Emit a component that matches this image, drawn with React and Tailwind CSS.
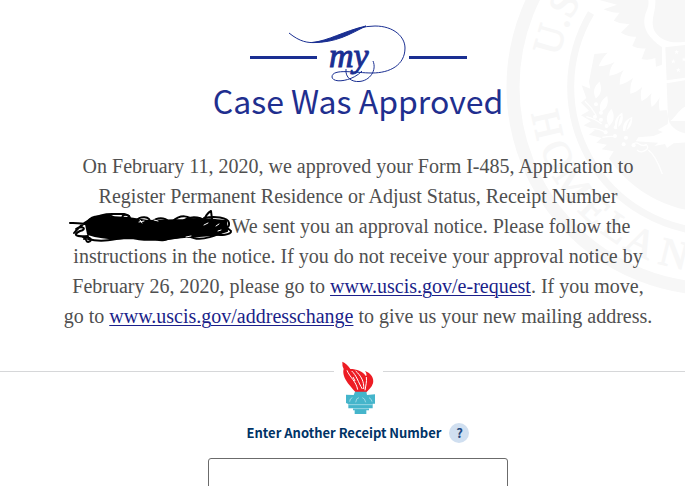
import React from "react";

const motto = [
  { letter: "H", at: 41 },
  { letter: "O", at: 76 },
  { letter: "M", at: 110 },
  { letter: "E", at: 147 },
  { letter: "L", at: 178 },
  { letter: "A", at: 208 },
  { letter: "N", at: 246 },
];

const leaves = [
  { x: 338, y: 270, r: 12 },
  { x: 357, y: 312, r: 22 },
  { x: 376, y: 352, r: 8 },
  { x: 402, y: 362, r: 22 },
  { x: 428, y: 372, r: 32 },
];

const berries = [
  [333, 313], [348, 338], [330, 350], [348, 359], [365, 378], [362, 397],
  [392, 382], [390, 408], [420, 388], [423, 413], [416, 433], [446, 436],
];

const stars = [
  [575, 156], [597, 178], [565, 184], [580, 210],
];

const Seal = () => (
  <svg
    className="pointer-events-none absolute top-0 left-1/2 ml-[157px] -z-10 text-[40px] font-['Liberation_Serif',serif]"
    width="430"
    height="300"
    viewBox="500 0 430 300"
    fill="#f7f7f7"
    aria-hidden="true"
  >
    <defs>
      <path id="sealTop" d="M556 87a159 159 0 0 1 318 0" />
      <path id="sealBottom" d="M530 87a185 185 0 0 0 370 0" />
    </defs>
    <circle cx="715" cy="87" r="202" fill="none" stroke="#f7f7f7" strokeWidth="13" />
    <path d="M591 13A145 145 0 0 0 715 232A145 145 0 0 0 839 13" fill="none" stroke="#f7f7f7" strokeWidth="7" />
    <text stroke="#f7f7f7">
      <textPath href="#sealTop" startOffset="30">U.S.</textPath>
    </text>
    {motto.map((m) => (
      <text key={m.letter} textAnchor="middle" stroke="#f7f7f7">
        <textPath href="#sealBottom" startOffset={m.at}>{m.letter}</textPath>
      </text>
    ))}

    <g transform="translate(485 0) scale(0.3333)">
      {/* upper wing and head */}
      <path d="M343 0L396 14L356 28Q382 40 404 38L386 62Q410 74 434 72L408 98Q432 112 454 110L442 138Q462 148 482 145L470 177Q490 182 511 174L513 200L531 194V142C490 112 476 88 478 60C480 34 494 24 490 0Z" />
      <path d="M511 0C514 34 494 58 508 92C526 122 560 132 600 125H640V0Z" />
      {/* shield */}
      <path d="M541 142L640 130V232L600 233L545 241Z" />
      <path d="M545 250L600 241H640V400H600C570 392 552 376 549 350Z" />
      <path d="M556 363C572 352 578 332 600 320H640V363Z" fill="#fff" />
      {/* lower wing, olive branch and body */}
      <path d="M328 162L368 158Q350 175 341 199Q366 198 389 186Q374 202 373 227Q396 224 416 210Q404 228 404 254Q426 250 444 234Q434 255 436 281Q456 276 472 260Q464 280 470 304Q486 296 500 279Q494 296 500 321Q514 312 524 292Q520 312 524 332L545 330Q552 352 548 372L518 390L534 396L506 408L460 412L452 424L520 428L508 438L540 432L546 444L566 430L640 424V636C520 620 432 560 372 476L386 454L350 448L366 434L334 428L350 414L312 404L330 390L296 376L318 364L288 346L312 332L288 308L304 294L290 256L316 266L312 245Z" />
      <g fill="#fff">
        {leaves.map((l) => (
          <path
            key={l.x}
            transform={`translate(${l.x} ${l.y}) rotate(${l.r})`}
            d="M0 26C-15 8-12-8 0-26C12-8 15 8 0 26Z"
          />
        ))}
        {berries.map(([x, y]) => (
          <circle key={`${x}-${y}`} cx={x} cy={y} r="6" />
        ))}
        {stars.map(([x, y]) => (
          <path
            key={x}
            transform={`translate(${x} ${y})`}
            d="M0-7L2-2L7-2L3 1L5 7L0 3L-5 7L-3 1L-7-2L-2-2Z"
          />
        ))}
      </g>
      <path
        d="M440 436Q450 424 462 432T484 434Q494 444 480 452T456 450M490 450Q512 466 532 522M300 304Q320 322 333 345M304 350Q330 356 350 372M318 386Q340 384 360 396M352 412Q374 408 392 410"
        fill="none"
        stroke="#fff"
        strokeWidth="4"
      />
      <path d="M398 386Q398 362 406 348M422 396Q426 372 436 358" fill="none" stroke="#f7f7f7" strokeWidth="4" />
    </g>
  </svg>
);

const MyLogo = () => (
  <svg className="mx-auto block" width="218" height="62" viewBox="249 22 218 62" role="img" aria-label="my">
    <g fill="#1a2f92">
      <path d="M250 56H317V59H250ZM409 56H467V59H409Z" />
      <path d="M312 42.500C328 41 344 31 366 26C350 34 336 43 312 42.500Z" stroke="#1a2f92" />
      <text x="329" y="67" className="text-[34px] italic font-['Liberation_Serif',serif]" stroke="#1a2f92">my</text>
    </g>
    <path
      d="M289 33C300 42 308 43 316 42.500C338 40 352 26 375 26C394 26 405 37 405 48C405 65 390 73 372 73C356 73 332 68 332 77C333 84 353 81 362 71M346 69C345 78 352 82 359 81.500C370 81 377 70 373 61"
      fill="none"
      stroke="#1a2f92"
      strokeWidth="1"
    />
  </svg>
);

const Scribble = () => (
  <svg
    className="inline-block h-6 align-middle overflow-visible"
    width="146"
    height="24"
    viewBox="88 215 146 24"
    fill="none"
    stroke="#000"
    strokeWidth="2"
    strokeLinecap="round"
    strokeLinejoin="round"
    role="img"
    aria-label="Receipt number hidden"
  >
    <path
      d="M88 223C92 215 100 214 112 216L130 217L150 220L187 219C200 216 212 219 228 220L229 230L216 234L186 236L164 238L132 237C118 238 102 237 90 233Z"
      fill="#000"
    />
    <path d="M72 222C84 221 96 226 110 222M78 228C84 224 90 228 82 230C74 234 78 236 90 235M76 232C84 222 98 213 114 213H126C140 216 124 222 112 220M80 235C92 236 86 241 90 241C96 240 92 234 86 238" />
    <path d="M90 238C104 242 118 238 132 236C144 240 156 239 164 238C176 240 184 232 196 237C204 240 220 234 226 230" />
    <path d="M126 219C120 212 134 212 132 220M138 221C140 214 154 215 152 222M154 221C160 215 172 217 170 223M174 221C182 213 192 214 196 221M186 219C194 214 206 216 207 222C205 216 211 211 213 210L214 218C200 221 208 224 224 221" />
    <path d="M206 217C216 215 230 216 231 222C232 228 226 226 224 224M214 233C222 235 234 234 233 230L228 226M216 228C222 222 230 224 228 230M155 236C160 241 170 240 174 235M96 219C108 210 124 216 112 222" />
    <g stroke="#fff" strokeWidth="1">
      <path d="M142 219L144 222M156 219L160 220M206 224L210 222M218 225L221 223M220 230L223 229M188 236L193 235M141 221L146 220" />
    </g>
  </svg>
);

const Torch = () => (
  <svg width="40" height="56" viewBox="53 30 120 168" aria-hidden="true">
    <path
      d="M66 38C76 42 84 50 90 60C108 60 128 66 137 82Q141 76 134 66C152 72 162 88 158 103C154 116 144 124 138 130H106C96 118 84 106 76 92C68 78 68 66 70 60Q65 50 66 38Z"
      fill="#ed1c24"
    />
    <path
      d="M80 64C88 84 108 98 112 122M94 66C108 78 114 100 126 120M106 66C122 80 132 98 130 120M138 84C140 98 136 110 134 124M98 84L104 96"
      fill="none"
      stroke="#fff"
      strokeWidth="3"
    />
    <path
      d="M104 128H138L140 138L164 136V164H157V178H146V184H138V195H103V184H98V178H84V165L77 162V137L100 138Z"
      fill="#45b5cb"
    />
    <path
      d="M88 158Q88 148 96 146M106 160Q108 146 116 146M126 146Q134 148 136 160M146 146Q154 150 155 158M84 167H157M98 179H146"
      fill="none"
      stroke="#c5eaf0"
      strokeWidth="2"
    />
  </svg>
);

const CaseStatus = () => {
  const linkStyle = "text-[#1b1f8a] underline decoration-1 underline-offset-2";

  return (
    <main className="relative isolate min-h-screen overflow-hidden bg-white">
      <Seal />

      <section className="pt-[22px] pl-[31px] text-center">
        <MyLogo />
        <h1 className="text-[32px] leading-8 text-[#1f2f8f] font-['Noto_Sans_CJK_SC',sans-serif]">
          Case Was Approved
        </h1>
        <p className="mt-[35px] text-[20px] leading-[30px] text-[#505050] font-['Liberation_Serif',serif]">
          On February 11, 2020, we approved your Form I-485, Application to
          <br />
          Register Permanent Residence or Adjust Status, Receipt Number
          <br />
          <Scribble />
          We sent you an approval notice. Please follow the
          <br />
          instructions in the notice. If you do not receive your approval notice by
          <br />
          February 26, 2020, please go to{" "}
          <a href="#e-request" className={linkStyle}>www.uscis.gov/e-request</a>. If you move,
          <br />
          go to{" "}
          <a href="#addresschange" className={linkStyle}>www.uscis.gov/addresschange</a> to give us
          your new mailing address.
        </p>
      </section>

      <div className="mt-7 flex items-start">
        <div className="mt-3 flex-1 border-t border-[#d6d7d9] pl-[31px]" />
        <div className="flex w-[49px] justify-center">
          <Torch />
        </div>
        <div className="mt-3 flex-1 border-t border-[#d6d7d9]" />
      </div>

      <form className="flex flex-col items-center pt-2 pl-[31px] font-['Noto_Sans_CJK_SC',sans-serif]">
        <div className="flex items-center gap-2">
          <label htmlFor="receipt_number" className="text-[13px] leading-5 font-bold text-[#003366]">
            Enter Another Receipt Number
          </label>
          <button
            type="button"
            aria-label="Help"
            className="h-5 w-5 rounded-full bg-[#d0dff0] text-[13px] leading-5 font-bold text-[#1f4a80]"
          >
            ?
          </button>
        </div>
        <input
          id="receipt_number"
          type="text"
          className="mt-[15px] h-10 w-[300px] rounded-[3px] border border-[#6b6b6b] bg-white px-3"
        />
      </form>
    </main>
  );
};

export default CaseStatus;
